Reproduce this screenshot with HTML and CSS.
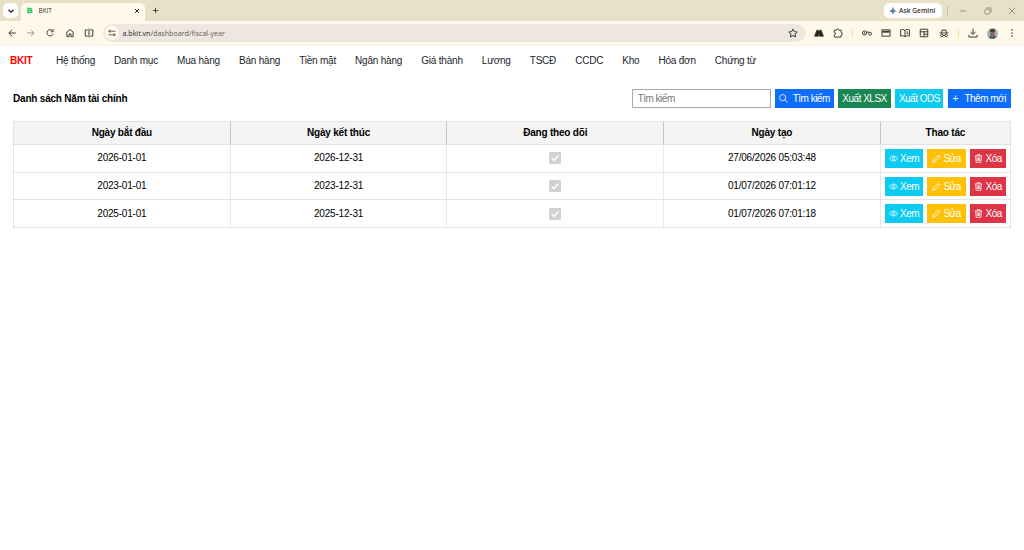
FILE: index.html
```html
<!DOCTYPE html>
<html lang="vi">
<head>
    <meta charset="UTF-8">
    <meta name="viewport" content="width=device-width, initial-scale=1.0">
    <title>BKIT</title>
    <link rel="stylesheet" href="styles.css">
</head>
<body>
    <svg class="sprite">
        <symbol id="eye" viewBox="0 0 16 16"><path d="M.8 8S3 3.500 8 3.500 15.200 8 15.200 8 13 12.500 8 12.500.8 8 .8 8z"/><circle cx="8" cy="8" r="2.500"/></symbol>
        <symbol id="pencil" viewBox="0 0 16 16"><path d="M1 15l1.500-4.500 9-9 3 3-9 9L1 15zM9.500 3.500l3 3M2.500 10.500l3 3"/></symbol>
        <symbol id="trash" viewBox="0 0 16 16"><path d="M1.500 3.500h13M5.500 3.500V1.200h5v2.300M3 3.500l.8 11.300h8.400L13 3.500M5.800 6v6.500M8 6v6.500M10.200 6v6.500"/></symbol>
        <symbol id="search" viewBox="0 0 16 16"><circle cx="6.500" cy="6.500" r="5.500"/><path d="M10.500 10.500l5 5"/></symbol>
        <symbol id="check" viewBox="0 0 12 12"><path d="M2.600 6.200l2.300 2.300 4.600-5"/></symbol>
    </svg>

    <div class="tab-strip">
        <div class="tab-list"><svg class="icon" viewBox="0 0 16 16"><path d="M4 6l4 4 4-4"/></svg></div>
        <div class="tab">
            <span class="favicon">B</span>
            <span class="tab-title">BKIT</span>
            <svg class="icon tab-close" viewBox="0 0 16 16"><path d="M4 4l8 8M12 4l-8 8"/></svg>
        </div>
        <svg class="icon new-tab" viewBox="0 0 16 16"><path d="M8 2v12M2 8h12"/></svg>
        <div class="window-tools">
            <div class="gemini">
                <svg viewBox="0 0 16 16">
                    <path fill="#4285f4" d="M8 0c1 5 3 7 8 8-5 1-7 3-8 8-1-5-3-7-8-8 5-1 7-3 8-8z"/>
                    <path fill="#ea4335" d="M8 0c1 5 1.800 5.500 3 6.500L8 8 5 6.500C6.500 5 7.500 3 8 0z"/>
                    <path fill="#34a853" d="M0 8c3 .7 5.500 1.800 6.500 3.500L8 8 5.500 6C4 7.200 2.500 7.500 0 8z"/>
                </svg>
                Ask Gemini
            </div>
            <i class="window-divider"></i>
            <svg class="icon win" viewBox="0 0 16 16"><path d="M3 8h10"/></svg>
            <svg class="icon win" viewBox="0 0 16 16"><rect x="3" y="5" width="8" height="8" rx="2"/><path d="M6 3h5q2 0 2 2v5"/></svg>
            <svg class="icon win" viewBox="0 0 16 16"><path d="M3 3l10 10M13 3L3 13"/></svg>
        </div>
    </div>

    <div class="toolbar">
        <div class="nav-buttons">
            <svg class="icon" viewBox="0 0 16 16"><path d="M14 8H3M8 3L3 8l5 5"/></svg>
            <svg class="icon faded" viewBox="0 0 16 16"><path d="M2 8h11M8 3l5 5-5 5"/></svg>
            <svg class="icon" viewBox="0 0 16 16"><path d="M13 9a5 5 0 1 1-1-4.500M13 2v4H9"/></svg>
            <svg class="icon" viewBox="0 0 16 16"><path d="M3 14V6.500L8 2.500l5 4V14h-3.500V9.500h-3V14z"/></svg>
            <svg class="icon" viewBox="0 0 16 16"><path d="M6 3H2v10h4M10 3h4v10h-4M8 1v14"/></svg>
        </div>
        <div class="address">
            <span class="site-info"><svg class="icon" viewBox="0 0 16 16"><path d="M1 4.500h2M7 4.500h8M1 11.500h8M13 11.500h2"/><circle cx="4" cy="4.500" r="2"/><circle cx="12" cy="11.500" r="2"/></svg></span>
            <span class="url"><b>a.bkit.vn</b>/dashboard/fiscal-year</span>
            <svg class="icon star" viewBox="0 0 16 16"><path d="M8 1.500l2 4.300 4.700.6-3.500 3.200.9 4.700L8 12l-4.100 2.300.9-4.700L1.300 6.400 6 5.800z"/></svg>
        </div>
        <div class="extensions">
            <svg class="icon" viewBox="0 0 16 16"><path fill="#222" d="M1 13L5 3l3 2 3-2 4 10H9L8 9l-1 4z"/></svg>
            <svg class="icon" viewBox="0 0 16 16"><path d="M2 3.500h3.500a2 2 0 0 1 4 0H13V7a2 2 0 0 1 0 4v3.500H2V11a2 2 0 0 0 0-4z"/></svg>
            <i class="divider"></i>
            <svg class="icon" viewBox="0 0 16 16"><circle cx="4" cy="8" r="3.300"/><circle cx="4" cy="8" r=".6"/><path d="M7 6.500h4"/><circle cx="13" cy="9" r="2.300"/></svg>
            <svg class="icon" viewBox="0 0 16 16"><rect x="1.500" y="3" width="13" height="10"/><path stroke-width="3" d="M2 6h12"/></svg>
            <svg class="icon" viewBox="0 0 16 16"><path d="M8 4v10C6 12 3 12 1 13V3c2-1 5-1 7 1 2-2 5-2 7-1v10c-2-1-5-1-7 1M10.500 6.500H13M10.500 9H13"/></svg>
            <svg class="icon" viewBox="0 0 16 16"><path d="M2 2h12v12H2zM2 6h12M8 6v8M8 10h6"/></svg>
            <svg class="icon" viewBox="0 0 16 16"><path d="M1 8h14M4 8l1-5 3 .8L11 3l1 5M6.500 12q1.500-1 3 0"/><circle cx="4.500" cy="12" r="2"/><circle cx="11.500" cy="12" r="2"/></svg>
            <i class="divider"></i>
            <svg class="icon" viewBox="0 0 16 16"><path d="M8 1v9M4 6.500L8 10l4-3.500M1.500 11v3.500h13V11"/></svg>
            <svg class="avatar" viewBox="0 0 16 16">
                <circle cx="8" cy="8" r="8" fill="#a3b7b8"/>
                <path fill="#49616c" d="M2 13q6-5 12 0-6 6-12 0z"/>
                <ellipse cx="8" cy="8" rx="3.500" ry="4.500" fill="#8d6459"/>
                <path fill="#353633" d="M4 5.500Q4 1.500 8 1.500t4 4z"/>
            </svg>
            <svg class="icon" viewBox="0 0 16 16"><path stroke-width="2.500" stroke-linecap="round" d="M8 3v0M8 8v0M8 13v0"/></svg>
        </div>
    </div>

    <nav class="menu">
        <a class="brand">BKIT</a>
        <a>Hệ thống</a>
        <a>Danh mục</a>
        <a>Mua hàng</a>
        <a>Bán hàng</a>
        <a>Tiền mặt</a>
        <a>Ngân hàng</a>
        <a>Giá thành</a>
        <a>Lương</a>
        <a>TSCĐ</a>
        <a>CCDC</a>
        <a>Kho</a>
        <a>Hóa đơn</a>
        <a>Chứng từ</a>
    </nav>

    <main>
        <div class="page-head">
            <h1>Danh sách Năm tài chính</h1>
            <div class="actions">
                <input type="text" placeholder="Tìm kiếm">
                <button class="btn primary search"><svg><use href="#search"/></svg>Tìm kiếm</button>
                <button class="btn success">Xuất XLSX</button>
                <button class="btn info">Xuất ODS</button>
                <button class="btn primary add"><span class="plus">+</span>Thêm mới</button>
            </div>
        </div>

        <div class="table">
            <div class="row head">
                <div>Ngày bắt đầu</div>
                <div>Ngày kết thúc</div>
                <div>Đang theo dõi</div>
                <div>Ngày tạo</div>
                <div>Thao tác</div>
            </div>
            <div class="row">
                <div>2026-01-01</div>
                <div>2026-12-31</div>
                <div><span class="checkbox"><svg><use href="#check"/></svg></span></div>
                <div>27/06/2026 05:03:48</div>
                <div class="row-actions">
                    <button class="btn info"><svg><use href="#eye"/></svg>Xem</button>
                    <button class="btn warning"><svg><use href="#pencil"/></svg>Sửa</button>
                    <button class="btn danger"><svg><use href="#trash"/></svg>Xóa</button>
                </div>
            </div>
            <div class="row">
                <div>2023-01-01</div>
                <div>2023-12-31</div>
                <div><span class="checkbox"><svg><use href="#check"/></svg></span></div>
                <div>01/07/2026 07:01:12</div>
                <div class="row-actions">
                    <button class="btn info"><svg><use href="#eye"/></svg>Xem</button>
                    <button class="btn warning"><svg><use href="#pencil"/></svg>Sửa</button>
                    <button class="btn danger"><svg><use href="#trash"/></svg>Xóa</button>
                </div>
            </div>
            <div class="row">
                <div>2025-01-01</div>
                <div>2025-12-31</div>
                <div><span class="checkbox"><svg><use href="#check"/></svg></span></div>
                <div>01/07/2026 07:01:18</div>
                <div class="row-actions">
                    <button class="btn info"><svg><use href="#eye"/></svg>Xem</button>
                    <button class="btn warning"><svg><use href="#pencil"/></svg>Sửa</button>
                    <button class="btn danger"><svg><use href="#trash"/></svg>Xóa</button>
                </div>
            </div>
        </div>
    </main>
</body>
</html>
```
FILE: styles.css
```css
* {
    box-sizing: border-box;
}
body {
    margin: 0;
    background: #fff;
    color: #000;
    font: 10px "Liberation Sans", Arial, sans-serif;
    letter-spacing: -0.2px;
    overflow: hidden;
}
svg {
    display: block;
    flex: none;
    fill: none;
    stroke: currentColor;
}
.sprite {
    width: 0;
    height: 0;
    position: absolute;
}
.icon {
    width: 10px;
    height: 10px;
    stroke-width: 1.6;
}

/* browser window */
.tab-strip {
    display: flex;
    align-items: center;
    height: 21px;
    padding-left: 3px;
    background: #e9e0c8;
    color: #37332a;
    font-family: "Open Sans", sans-serif;
    letter-spacing: 0;
}
.tab-list {
    display: flex;
    align-items: center;
    justify-content: center;
    width: 15px;
    height: 15px;
    border-radius: 5px;
    background: #fff;
}
.tab-list .icon {
    stroke-width: 2.2;
}
.tab {
    display: flex;
    align-items: center;
    align-self: flex-end;
    width: 124px;
    height: 18px;
    margin-left: 3px;
    padding: 0 4px 3px 6px;
    border-radius: 5px 5px 0 0;
    background: #fff9ec;
}
.favicon {
    width: 6px;
    color: #12c45c;
    font: bold 7.5px "Liberation Sans", sans-serif;
    -webkit-text-stroke: 0.4px #12c45c;
}
.tab-title {
    margin-left: 5.5px;
    font-size: 6.4px;
}
.tab-close {
    width: 8px;
    height: 8px;
    margin-left: auto;
    stroke-width: 2;
}
.new-tab {
    width: 7px;
    height: 7px;
    margin-left: 7px;
    stroke-width: 2;
}
.window-tools {
    display: flex;
    align-items: center;
    margin-left: auto;
    padding-right: 7px;
    color: #777161;
}
.gemini {
    display: flex;
    align-items: center;
    gap: 2.5px;
    width: 58px;
    height: 15px;
    padding-left: 4.5px;
    border-radius: 5px;
    background: #fff;
    color: #37332a;
    font-size: 6.7px;
    font-weight: 600;
    white-space: nowrap;
}
.gemini svg {
    width: 8px;
    height: 8px;
    stroke: none;
}
.window-divider {
    width: 1px;
    height: 9px;
    margin: 0 10.5px 0 4.5px;
    background: #c9c0a9;
}
.win {
    stroke-width: 1.1;
}
.win + .win {
    margin-left: 14.5px;
}
.toolbar {
    display: flex;
    align-items: center;
    height: 25px;
    padding: 0 7px;
    border-bottom: 1px solid #f8efe5;
    background: #fff9ec;
    color: #403d30;
    letter-spacing: 0;
}
.nav-buttons {
    display: flex;
    gap: 9.2px;
    width: 96px;
}
.faded {
    opacity: 0.5;
}
.address {
    display: flex;
    align-items: center;
    width: 703px;
    height: 18px;
    padding: 0 8px 0 2px;
    border-radius: 9px;
    background: #eee6e0;
}
.site-info {
    display: flex;
    align-items: center;
    justify-content: center;
    width: 14px;
    height: 14px;
    border-radius: 50%;
    background: #fff9ec;
}
.site-info .icon {
    width: 8px;
    height: 8px;
}
.url {
    margin-left: 3.5px;
    color: #666157;
    font: 7.1px "Open Sans", sans-serif;
}
.url b {
    color: #29261f;
    font-weight: 400;
}
.star {
    margin-left: auto;
}
.extensions {
    display: flex;
    align-items: center;
    justify-content: space-between;
    width: 203px;
    margin-left: 8px;
}
.divider {
    width: 1px;
    height: 8px;
    background: #f7df8b;
}
.avatar {
    width: 11px;
    height: 11px;
    stroke: none;
}

/* application */
.menu {
    display: flex;
    align-items: center;
    gap: 19px;
    height: 29px;
    margin-bottom: 1px;
    padding-left: 10px;
    color: #212529;
    white-space: nowrap;
}
.menu .brand {
    margin-right: 4.5px;
    color: #f00;
    font-weight: bold;
}
main {
    padding: 0 13px;
}
.page-head {
    display: flex;
    align-items: center;
    justify-content: space-between;
    height: 45px;
}
h1 {
    margin: 0;
    font-size: 10px;
}
.actions {
    display: flex;
    gap: 4.6px;
    margin-right: 0.5px;
}
input {
    width: 139px;
    height: 19px;
    padding: 0 5px 1px;
    border: 1px solid #aaa;
    font: 10px "Liberation Sans", sans-serif;
    letter-spacing: -0.5px;
}
input::placeholder {
    color: #757575;
}
.btn {
    display: flex;
    align-items: center;
    justify-content: center;
    height: 19px;
    padding: 0;
    border: 0;
    color: #fff;
    font: 10px "Liberation Sans", Arial, sans-serif;
    letter-spacing: -0.5px;
    white-space: nowrap;
}
.btn svg {
    width: 9px;
    height: 9px;
    stroke-width: 1.4;
}
.primary {
    background: #0d6efd;
}
.success {
    background: #198754;
}
.info {
    background: #0dcaf0;
}
.warning {
    background: #ffc107;
}
.danger {
    background: #dc3545;
}
.actions .search {
    gap: 4.5px;
    width: 58.5px;
}
.actions .success {
    width: 52.5px;
}
.actions .info {
    width: 48px;
}
.actions .add {
    gap: 6.5px;
    width: 62.5px;
}
.table {
    width: 998px;
    border: 1px solid #e2e2e2;
    border-bottom: 0;
}
.row {
    display: grid;
    grid-template-columns: 215.7px 216.7px 216.7px 216.7px 1fr;
    height: 27.7px;
    border-bottom: 1px solid #e2e2e2;
}
.row > div {
    display: flex;
    align-items: center;
    justify-content: center;
    padding-bottom: 1px;
}
.row > div + div {
    border-left: 1px solid #e8e8e8;
}
.row.head {
    height: 23px;
    background: #f4f4f4;
    font-weight: bold;
}
.row.head > div + div {
    border-left-color: #c4c4c4;
}
.checkbox {
    width: 12px;
    height: 12px;
    margin-top: 1px;
    border-radius: 1px;
    background: #d1d1d1;
    color: #fff;
}
.checkbox svg {
    width: 12px;
    height: 12px;
    stroke-width: 1.6;
}
.row > .row-actions {
    gap: 4px;
    padding-bottom: 0;
}
.row-actions .btn {
    gap: 2.5px;
    width: 38.5px;
}
.row-actions .danger {
    width: 36.5px;
}
```
